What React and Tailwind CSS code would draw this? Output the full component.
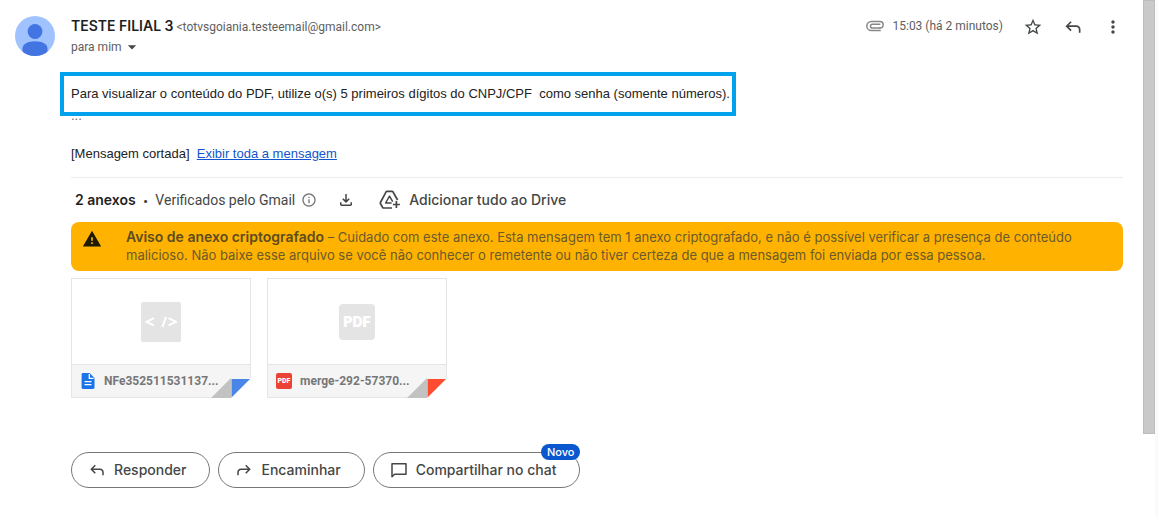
import { MdArrowDropDown, MdInfoOutline, MdMoreVert, MdStarBorder, MdWarning } from 'react-icons/md';

const attachments = [
    { id: 'xml', name: 'NFe352511531137...', fold: '#4986e7', kind: 'code' },
    { id: 'pdf', name: 'merge-292-57370...', fold: '#ff4b2f', kind: 'pdf' }
];

const ReplyIcon = ({ className }) => (
    <svg viewBox="0 -960 960 960" fill="currentColor" className={className}>
        <path d="M760-200v-160q0-50-35-85t-85-35H273l144 144-57 56-240-240 240-240 57 56-144 144h367q83 0 141.5 58.5T840-360v160h-80Z" />
    </svg>
);

const ForwardIcon = ({ className }) => (
    <svg viewBox="0 -960 960 960" fill="currentColor" className={className}>
        <path d="M120-200v-160q0-83 58.5-141.5T320-560h367L543-704l57-56 240 240-240 240-57-56 144-144H320q-50 0-85 35t-35 85v160h-80Z" />
    </svg>
);

const DownloadIcon = ({ className }) => (
    <svg viewBox="0 -960 960 960" fill="currentColor" className={className}>
        <path d="M480-320 280-520l56-58 104 104v-326h80v326l104-104 56 58-200 200ZM240-160q-33 0-56.5-23.5T160-240v-120h80v120h480v-120h80v120q0 33-23.5 56.5T720-160H240Z" />
    </svg>
);

const ChatIcon = ({ className }) => (
    <svg viewBox="0 0 18 18" fill="none" stroke="currentColor" strokeWidth="1.5" className={className}>
        <path d="M2 15.8V2.7h14v10.5H4.6z" strokeLinejoin="round" />
    </svg>
);

const ClipIcon = ({ className }) => (
    <svg viewBox="0 0 18 12" fill="none" stroke="currentColor" strokeWidth="1.5" strokeLinecap="round" className={className}>
        <path d="M14.2 8.1H6.4a1.9 1.9 0 0 1 0-3.8h7.4" />
        <path d="M14.2 10.6H5.4a4.6 4.6 0 0 1 0-9.2h8.400a3.350 3.350 0 0 1 0 6.700" />
    </svg>
);

const DriveAddIcon = ({ className }) => (
    <svg viewBox="0 0 22 20" fill="none" stroke="currentColor" strokeWidth="1.7" strokeLinejoin="round" className={className}>
        <path d="M13 18H4.600q-.6 0-.9-.5l-2.300-4q-.3-.5 0-1L7.100 1.800q.3-.5.9-.5h5q.6 0 .9.5l4.700 8.200" />
        <path d="M12.600 13H6.600l3.900-6.800 3.200 5.400" strokeWidth="1.500" />
        <path d="M17.400 11v7M13.900 14.500h7" />
    </svg>
);

const Avatar = () => (
    <svg viewBox="0 0 40 40" className="size-10 shrink-0">
        <defs>
            <clipPath id="avatarClip">
                <circle cx="20" cy="20" r="20" />
            </clipPath>
        </defs>
        <g clipPath="url(#avatarClip)">
            <rect width="40" height="40" fill="#a0c3ff" />
            <circle cx="20" cy="15.5" r="7.4" fill="#4274e2" />
            <path d="M7.500 40v-7.500c0-4.500 5.500-7.300 12.500-7.300s12.500 2.800 12.500 7.300V40z" fill="#4274e2" />
        </g>
    </svg>
);

const Preview = ({ kind }) =>
    kind === 'code' ? (
        <div className="flex size-10 items-center justify-center rounded-xs bg-[#e4e4e4]">
            <svg viewBox="0 0 32 12" fill="none" stroke="#fff" strokeWidth="2" className="w-8">
                <path d="M9 2.200 1.500 5.800 9 9.400M23.500 2.200 31 5.800 23.500 9.400M21 .8l-3.600 10.400" />
            </svg>
        </div>
    ) : (
        <div className="flex size-9 items-center justify-center rounded-sm bg-[#e4e4e4] text-sm font-black text-white">
            PDF
        </div>
    );

const FileIcon = ({ kind }) =>
    kind === 'code' ? (
        <svg viewBox="0 0 16 16" className="size-4 shrink-0">
            <path d="M3 0h6.500L14.500 5v9.600q0 1.400-1.400 1.400H3q-1.400 0-1.400-1.400V1.400Q1.600 0 3 0z" fill="#1a73e8" />
            <path d="M9.300 1v4.300h4.300M4.500 8.600h7M4.500 11.700h7" stroke="#fff" strokeWidth="1.300" fill="none" />
        </svg>
    ) : (
        <span className="flex size-4 shrink-0 items-center justify-center rounded-xs bg-[#ea4335] text-[7px] leading-none font-black text-white">
            PDF
        </span>
    );

const AttachmentCard = ({ name, fold, kind }) => (
    <a href="#anexo" className="relative flex h-30 w-45 flex-col border border-[#e5e5e5] bg-white">
        <span className="flex flex-1 items-center justify-center">
            <Preview kind={kind} />
        </span>
        <span className="flex h-[33px] items-center gap-2 border-t border-[#e5e5e5] bg-[#f5f5f5] pl-2 font-[Roboto,sans-serif] text-xs font-bold text-[#777]">
            <FileIcon kind={kind} />
            {name}
        </span>
        {/* Folded corner */}
        <svg viewBox="0 0 40 20" className="absolute -right-px -bottom-px h-5 w-10">
            <path d="M20 20 40 0v20z" fill="#fff" />
            <path d="M0 20 20 0v20z" fill="#c2c2c2" />
            <path d="M20.500 1H39L20.500 19.500z" fill={fold} />
        </svg>
    </a>
);

const PillButton = ({ icon: Icon, children, badge }) => (
    <button
        type="button"
        className="relative flex h-9 items-center gap-2 rounded-full border border-[#747775] pr-[23px] pl-4 text-sm font-medium text-[#444746]"
    >
        <Icon className="size-[18px]" />
        {children}
        {badge && (
            <span className="absolute -top-[9px] -right-px rounded-full bg-[#0b57d0] px-1.5 text-[11px] leading-4 font-medium text-white">
                {badge}
            </span>
        )}
    </button>
);

const MessageHeader = () => (
    <header className="flex items-start justify-between font-[Roboto,sans-serif]">
        <div className="text-[#5e5e5e]">
            <h1 className="text-xs leading-5">
                <span className="font-[Inter,sans-serif] text-sm font-semibold text-[#1f1f1f]">TESTE FILIAL 3</span>{' '}
                &lt;totvsgoiania.testeemail@gmail.com&gt;
            </h1>
            <button type="button" className="flex items-center text-xs leading-5">
                para mim
                <MdArrowDropDown className="size-5 text-[#444746]" />
            </button>
        </div>
        <div className="flex h-5 items-center text-xs text-[#5e5e5e]">
            <ClipIcon className="mr-2 h-3 w-[18px] text-[#888]" />
            <span className="mr-5">15:03 (há 2 minutos)</span>
            <div className="flex items-center gap-5 pt-0.5 text-[#444746]">
                <button type="button" aria-label="Com estrela">
                    <MdStarBorder className="size-5" />
                </button>
                <button type="button" aria-label="Responder">
                    <ReplyIcon className="size-5" />
                </button>
                <button type="button" aria-label="Mais">
                    <MdMoreVert className="size-5" />
                </button>
            </div>
        </div>
    </header>
);

const App = () => {
    return (
        <div className="flex min-h-screen bg-[#f8fafd] font-[Inter,sans-serif]">
            <main className="flex flex-1 items-start gap-4 bg-white pt-4 pr-5 pb-7 pl-[15px]">
                <Avatar />
                <div className="min-w-0 flex-1">
                    <MessageHeader />

                    <div className="font-['Liberation_Sans',Arial,sans-serif] text-[13px] text-[#222]">
                        <p className="mt-[15px] -mb-1 -ml-[11px] w-fit border-4 border-[#00a2ed] py-2 pr-0.5 pl-[7px] leading-5">
                            Para visualizar o conteúdo do PDF, utilize o(s) 5 primeiros dígitos do CNPJ/CPF&nbsp; como senha
                            (somente números).
                        </p>
                        <p className="leading-2 text-[#666]">...</p>
                        <p className="mt-6 leading-5">
                            [Mensagem cortada]&nbsp;{' '}
                            <a href="#mensagem" className="text-[#15c] underline">
                                Exibir toda a mensagem
                            </a>
                        </p>
                    </div>

                    <section className="mt-[13px] border-t border-[#ececec]">
                        <div className="flex h-11 items-center pl-1 text-sm text-[#444746]">
                            <h2 className="font-semibold text-[#1f1f1f]">2 anexos</h2>
                            <span className="mx-[7px] text-[10px]">•</span>
                            <span className="font-[Roboto,sans-serif]">Verificados pelo Gmail</span>
                            <MdInfoOutline className="ml-1.5 size-4 text-[#777]" />
                            <button type="button" aria-label="Baixar tudo" className="ml-5">
                                <DownloadIcon className="size-[18px]" />
                            </button>
                            <button type="button" className="ml-6 flex items-center gap-2 font-medium">
                                <DriveAddIcon className="h-5 w-[22px]" />
                                Adicionar tudo ao Drive
                            </button>
                        </div>

                        <div className="flex gap-6 rounded-lg bg-[#ffb300] px-[11px] pt-1.5 pb-[7px] text-[13px] leading-[18px] text-[#6b5a2c]">
                            <MdWarning className="mt-px size-5 shrink-0 text-[#1f1a00]" />
                            <p>
                                <strong className="text-sm leading-[18px] font-semibold text-[#5c4c20]">
                                    Aviso de anexo criptografado
                                </strong>{' '}
                                – Cuidado com este anexo. Esta mensagem tem 1 anexo criptografado, e não é possível verificar a
                                presença de conteúdo malicioso. Não baixe esse arquivo se você não conhecer o remetente ou não
                                tiver certeza de que a mensagem foi enviada por essa pessoa.
                            </p>
                        </div>

                        <div className="mt-[7px] flex flex-wrap gap-4">
                            {attachments.map((file) => (
                                <AttachmentCard key={file.id} {...file} />
                            ))}
                        </div>
                    </section>

                    <div className="mt-[54px] flex flex-wrap gap-2">
                        <PillButton icon={ReplyIcon}>Responder</PillButton>
                        <PillButton icon={ForwardIcon}>Encaminhar</PillButton>
                        <PillButton icon={ChatIcon} badge="Novo">
                            Compartilhar no chat
                        </PillButton>
                    </div>
                </div>
            </main>

            {/* Scrollbar */}
            <div className="mr-[3px] w-3 bg-white">
                <div className="h-[84vh] border border-[#bdbdbd] bg-[#c9c9c9]" />
            </div>
        </div>
    );
};

export default App;
